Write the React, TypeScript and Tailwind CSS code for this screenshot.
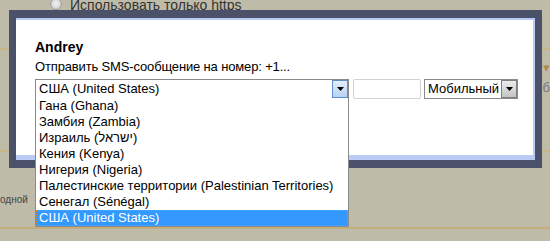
import React from "react";

const countries = [
  "Гана (Ghana)",
  "Замбия (Zambia)",
  "Израиль (ישראל)",
  "Кения (Kenya)",
  "Нигерия (Nigeria)",
  "Палестинские территории (Palestinian Territories)",
  "Сенегал (Sénégal)",
  "США (United States)",
];

function Arrow() {
  return (
    <svg width="7" height="4" viewBox="0 0 7 4" className="block">
      <path d="M0 0h7L3.5 4z" fill="#000" />
    </svg>
  );
}

export default function App() {
  return (
    <div className="relative h-[241px] w-[550px] overflow-hidden bg-[#bfbba9] font-['Liberation_Sans',Arial,sans-serif] text-black">
      {/* page behind the dialog */}
      <div className="flex flex-col">
        <div className="-mt-[3px] flex h-[17px] items-start pl-[50px]">
          <span className="mt-[1px] h-[12px] w-[12px] shrink-0 rounded-full border border-[#9c9c9c] bg-[radial-gradient(circle_at_50%_45%,#f2f2f2,#c4c4c4)]" />
          <span className="ml-[8px] whitespace-nowrap text-[14px] leading-[17px] text-[#333]">Использовать только https</span>
        </div>
        <div className="mt-[34px] h-[2px] bg-[#c9b588]" />
        <div className="mt-[8px] flex h-[92px] flex-col items-end text-[13px] leading-[20px]">
          <span className="text-[#4a5470]">
            и <span className="text-[#b08a4a]">▾</span>
          </span>
          <span className="text-[#777]">бб</span>
        </div>
        <div className="h-[2px] bg-[#c9b588]" />
        <div className="mt-[42px] text-[10px] leading-[12px] text-[#444]">одной</div>
        <div className="mt-[21px] h-[2px] bg-[#c6ae7c]" />
      </div>

      {/* dialog */}
      <div className="absolute left-[9px] top-[10px] h-[158px] w-[533px] bg-[#4b5168] px-[7px] pb-[8px] pt-[8px]">
        <div className="h-full border-b-[5px] border-r-2 border-t-2 border-[#bccbf5] bg-white pl-[19px] pt-[19px]">
          <div className="text-[14px] font-bold leading-[16px]">Andrey</div>
          <div className="mt-[4px] text-[13px] leading-[15px] tracking-[-0.15px]">Отправить SMS-сообщение на номер: +1...</div>
          <div className="mt-[5px] flex items-start">
            <div className="relative flex h-[20px] w-[314px] items-center border border-[#8a8a8a]">
              <span className="flex-1 pl-[3px] text-[13px] leading-[16px]">США (United States)</span>
              <span className="flex h-[18px] w-[16px] items-center justify-center border border-[#5f8fc8] bg-[linear-gradient(#e3eefc,#b6d2f4)]">
                <Arrow />
              </span>
              <ul className="absolute -left-px top-full w-[314px] border-x border-b border-[#8a8a8a] bg-white">
                {countries.map((c, i) => (
                  <li
                    key={c}
                    className={
                      i === countries.length - 1
                        ? "h-[16px] bg-[#3399ff] pl-[3px] text-[13px] leading-[16px] text-white outline-1 -outline-offset-1 outline-dotted outline-[#e0883a]"
                        : "h-[16px] pl-[3px] text-[13px] leading-[16px]"
                    }
                  >
                    {c}
                  </li>
                ))}
              </ul>
            </div>
            <div className="ml-[4px] h-[20px] w-[68px] rounded-[2px] border border-[#d2d2d2]" />
            <div className="ml-[3px] flex h-[20px] w-[94px] items-center border border-[#8a8a8a]">
              <span className="flex-1 pl-[3px] text-[13px] leading-[16px]">Мобильный</span>
              <span className="flex h-[18px] w-[16px] items-center justify-center border border-[#808080] bg-[linear-gradient(#ececec,#c4c4c4)]">
                <Arrow />
              </span>
            </div>
          </div>
        </div>
      </div>
    </div>
  );
}
